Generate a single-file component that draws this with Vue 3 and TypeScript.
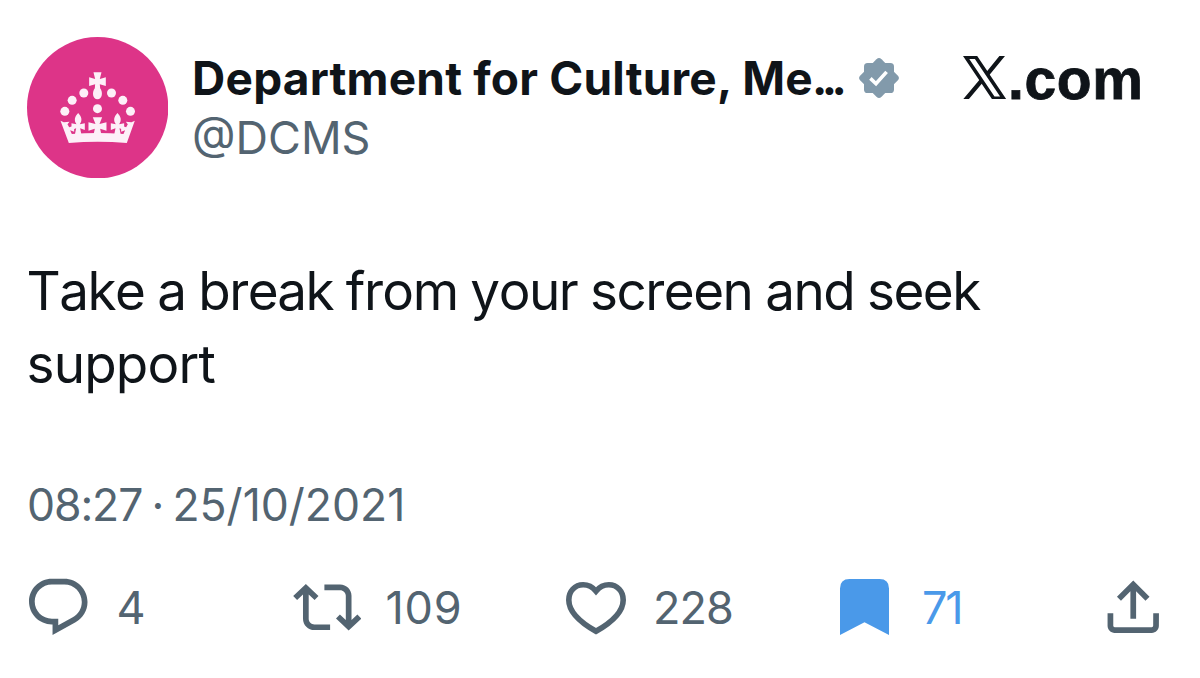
<script setup lang="ts">
interface Dot {
  x: number
  y: number
}

const author = { name: 'Department for Culture, Me', handle: '@DCMS' }
const lines: string[] = ['Take a break from your screen and seek', 'support']
const posted = { time: '08:27', date: '25/10/2021' }
const counts = { replies: 4, reposts: 109, likes: 228, bookmarks: 71 }

const pearls: Dot[] = [
  { x: 134, y: 243 },
  { x: 156, y: 210 },
  { x: 191, y: 188 },
  { x: 232, y: 235 },
  { x: 274, y: 188 },
  { x: 308, y: 210 },
  { x: 331, y: 243 },
]

const fleurs: number[] = [174, 292]
</script>

<template>
  <article class="post">
    <header class="head">
      <svg class="avatar" viewBox="20.5 20 424 424" aria-hidden="true">
        <circle cx="232.5" cy="232" r="212" fill="#dd3488" />
        <g fill="#fdf0f8">
          <circle v-for="p in pearls" :key="`${p.x}-${p.y}`" :cx="p.x" :cy="p.y" r="13.5" />
          <path d="M220 126h24l-5 20 18-5v26l-18-5 1 12c9 11 7 33-8 33s-17-22-8-33l1-12-18 5v-26l18 5z" />
          <path d="M121 271l10 5 17-2-6 8 5 9 15-5v18l-12-4 5 11q77-6 155 0l5-11-12 4v-18l15 5 5-9-6-8 17 2 10-5-24 67q-87-8-174 0z" />
          <path d="M218 261h28l-8 20 21-5v25l-19-6 4 20h-24l4-20-19 6v-25l21 5z" />
          <path
            v-for="x in fleurs"
            :key="x"
            :transform="`translate(${x} 0)`"
            d="M0 248c11 11 13 22 5 34l15-3v20l-14-5 4 20h-20l4-20-14 5v-20l15 3c-8-12-6-23 5-34z"
          />
        </g>
      </svg>
      <div class="who">
        <div class="name-row">
          <span class="name">{{ author.name }}<span class="dots">...</span></span>
          <svg class="badge" viewBox="-20 -20 40 40" aria-hidden="true">
            <g fill="#829aab">
              <rect x="-15" y="-15" width="30" height="30" rx="3.6" />
              <rect x="-15" y="-15" width="30" height="30" rx="3.6" transform="rotate(45)" />
            </g>
            <path d="M-8.6.4l5.6 5.3L7.6-6.1" fill="none" stroke="#fff" stroke-width="3.6" />
          </svg>
        </div>
        <div class="handle">{{ author.handle }}</div>
      </div>
      <div class="brand">
        <svg class="x-logo" viewBox="0 0 43.4 43.4" aria-hidden="true">
          <path
            fill-rule="evenodd"
            d="M0 0h14.2l29.2 43.4H29.2zM6.3 2.9l25.2 37.6h5.600L11.900 2.900z"
          />
          <path d="M36.400 0h5.600L26.200 19.200l-2.400-3.700zM0 43.400h5.600l14.200-17-2.400-3.600z" />
        </svg>
        <span class="brand-text">.com</span>
      </div>
    </header>

    <p class="text">
      <span v-for="line in lines" :key="line" class="line">{{ line }}</span>
    </p>

    <div class="stamp">{{ posted.time }} · <span class="date">{{ posted.date }}</span></div>

    <footer class="actions">
      <div class="action reply">
        <svg class="icon" viewBox="0 0 24 24" aria-hidden="true">
          <path
            d="M1.751 10c0-4.420 3.584-8 8.005-8h4.366c4.490 0 8.129 3.640 8.129 8.130 0 2.960-1.607 5.680-4.196 7.110l-8.054 4.460v-3.690h-.067c-4.490.1-8.183-3.510-8.183-8.010zm8.005-6c-3.317 0-6.005 2.690-6.005 6 0 3.370 2.770 6.080 6.138 6.010l.351-.010h1.761v2.300l5.087-2.810c1.951-1.080 3.163-3.130 3.163-5.360 0-3.390-2.744-6.130-6.129-6.130H9.756z"
          />
        </svg>
        <span class="count">{{ counts.replies }}</span>
      </div>
      <div class="action repost">
        <svg class="icon" viewBox="0 0 24 24" aria-hidden="true">
          <path
            d="M4.500 3.880l4.432 4.140-1.364 1.460L5.500 7.550V16c0 1.100.896 2 2 2H13v2H7.500c-2.209 0-4-1.790-4-4V7.550L1.432 9.480.068 8.020 4.500 3.880zM16.500 6H11V4h5.500c2.209 0 4 1.790 4 4v8.450l2.068-1.930 1.364 1.460-4.432 4.140-4.432-4.140 1.364-1.460 2.068 1.930V8c0-1.100-.896-2-2-2z"
          />
        </svg>
        <span class="count">{{ counts.reposts }}</span>
      </div>
      <div class="action like">
        <svg class="heart" viewBox="0 0 60 53" aria-hidden="true">
          <path
            d="M30 9.200C26.400 4.900 22 2.800 17.200 2.800 8.800 2.800 2.800 9.300 2.800 18c0 11.500 10.200 21.700 27.200 31.300C47 39.700 57.200 29.500 57.200 18c0-8.700-6-15.200-14.400-15.200C38 2.800 33.600 4.900 30 9.200z"
            fill="none"
            stroke="currentColor"
            stroke-width="5.600"
          />
        </svg>
        <span class="count">{{ counts.likes }}</span>
      </div>
      <div class="action mark">
        <svg class="bookmark" viewBox="0 0 49 56" aria-hidden="true">
          <path d="M0 9.500Q0 0 9.500 0h30Q49 0 49 9.500V56L24.500 43.300 0 56z" />
        </svg>
        <span class="count">{{ counts.bookmarks }}</span>
      </div>
      <svg class="icon share" viewBox="0 0 24 24" aria-hidden="true">
        <path
          d="M12 2.590l5.700 5.700-1.410 1.420L13 6.410V16h-2V6.410l-3.300 3.300-1.410-1.420L12 2.590zM21 14.100l-.020 4.410c0 1.380-1.120 2.490-2.500 2.490H5.500C4.110 21 3 19.880 3 18.500v-4.400h2v4.400c0 .280.220.5.5.5h12.980c.280 0 .5-.220.5-.5l.020-4.400h2z"
        />
      </svg>
    </footer>
  </article>
</template>

<style>
body {
  background: #fff;
}
</style>

<style scoped>
.post {
  box-sizing: border-box;
  width: 1200px;
  height: 678px;
  padding: 37px 28px 0;
  overflow: hidden;
  background: #fff;
  color: #0f1419;
  font-family: Inter, "Liberation Sans", sans-serif;
  white-space: nowrap;
}

.head {
  display: flex;
  align-items: flex-start;
  height: 142px;
}

.avatar {
  flex: none;
  width: 141.3px;
  height: 141.3px;
  margin-left: -1.2px;
}

.who {
  flex: none;
  width: 771px;
  margin: 11px 0 0 24px;
}

.name-row {
  display: flex;
  align-items: center;
  height: 60px;
}

.name {
  width: 667px;
  font-size: 46px;
  font-weight: 700;
  line-height: 60px;
  letter-spacing: 0.2px;
}

.dots {
  margin-left: -1px;
  letter-spacing: -5.5px;
}

.badge {
  width: 40px;
  height: 40px;
}

.handle {
  color: #536471;
  font-size: 45px;
  line-height: 60px;
}

.brand {
  display: flex;
  align-items: flex-start;
  margin-top: 19px;
}

.x-logo {
  width: 43.4px;
  height: 43.4px;
  fill: #0f1419;
}

.brand-text {
  margin: -6px 0 0 1.5px;
  font-family: "Liberation Sans", sans-serif;
  font-size: 57px;
  font-weight: 700;
  line-height: 58px;
  letter-spacing: 0.6px;
  -webkit-text-stroke: 0.8px #0f1419;
}

.text {
  margin: 76px 0 0 -1.5px;
  font-size: 53px;
  line-height: 72.5px;
  letter-spacing: -0.8px;
}

.line {
  display: block;
}

.line:first-child {
  font-kerning: none;
  letter-spacing: -1.5px;
  word-spacing: -0.6px;
}

.stamp {
  margin: 78px 0 0 -1px;
  color: #536471;
  font-size: 44.5px;
  line-height: 54px;
  letter-spacing: -1.1px;
  word-spacing: -2.2px;
}

.date {
  letter-spacing: 0;
}

.actions {
  display: flex;
  align-items: center;
  height: 68.5px;
  margin: 41.2px 0 0 -4px;
  color: #536471;
}

.action {
  display: flex;
  flex: none;
  align-items: center;
}

.icon {
  flex: none;
  width: 68.5px;
  height: 68.5px;
  fill: currentColor;
}

.count {
  margin-top: 2px;
  font-size: 45px;
  line-height: 54px;
  letter-spacing: -0.9px;
}

.reply {
  width: 268.5px;
}

.reply .count {
  margin-left: 24px;
}

.repost {
  width: 273px;
}

.repost .count {
  margin-left: 24.5px;
  letter-spacing: 0.8px;
}

.heart {
  width: 60px;
  height: 53px;
  margin-top: 2.5px;
}

.like {
  width: 274.5px;
}

.like .count {
  margin-left: 27.5px;
}

.bookmark {
  width: 49px;
  height: 56px;
  fill: currentColor;
}

.mark {
  width: 258.5px;
  color: #4a99e9;
}

.mark .count {
  margin-left: 33px;
  letter-spacing: -2.2px;
}
</style>
